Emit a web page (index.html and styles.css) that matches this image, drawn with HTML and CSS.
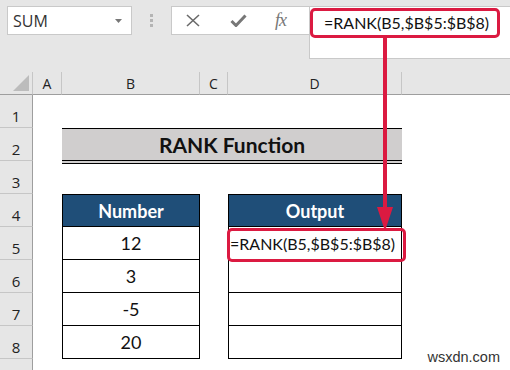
FILE: index.html
```html
<!DOCTYPE html>
<html lang="en">
<head>
    <meta charset="UTF-8">
    <title>RANK Function</title>
    <link rel="stylesheet" href="styles.css">
</head>
<body>
    <div class="app">
        <div class="toolbar">
            <div class="name-box">
                <span>SUM</span>
                <svg class="drop" width="7" height="4" viewBox="0 0 7 4"><polygon points="0,0 7,0 3.5,4" /></svg>
            </div>
            <div class="grip"><i></i><i></i><i></i></div>
            <div class="buttons">
                <svg class="btn-x" width="14" height="13" viewBox="0 0 14 13"><path d="M1 1 L13 12 M13 1 L1 12" /></svg>
                <svg class="btn-check" width="17" height="13" viewBox="0 0 17 13"><path d="M1.5 7 L6 11.5 L15.5 1.5" /></svg>
                <span class="fx">fx</span>
            </div>
            <div class="formula-bar">
                <span class="formula">=RANK(B5,$B$5:$B$8)</span>
            </div>
        </div>

        <div class="sheet">
            <div class="corner"><svg width="16" height="16" viewBox="0 0 16 16"><polygon points="16,0 16,16 0,16" /></svg></div>
            <div class="col-head">A</div>
            <div class="col-head">B</div>
            <div class="col-head">C</div>
            <div class="col-head">D</div>
            <div class="col-head last"></div>

            <div class="row-head">1</div>
            <div></div><div></div><div></div><div></div><div></div>

            <div class="row-head">2</div>
            <div></div>
            <div class="title">RANK Function</div>
            <div></div>

            <div class="row-head">3</div>
            <div></div><div></div><div></div><div></div><div></div>

            <div class="row-head">4</div>
            <div></div>
            <div class="th">Number</div>
            <div></div>
            <div class="th">Output</div>
            <div></div>

            <div class="row-head">5</div>
            <div></div>
            <div class="td">12</div>
            <div></div>
            <div class="td marked">=RANK(B5,$B$5:$B$8)</div>
            <div></div>

            <div class="row-head">6</div>
            <div></div>
            <div class="td">3</div>
            <div></div>
            <div class="td"></div>
            <div></div>

            <div class="row-head">7</div>
            <div></div>
            <div class="td">-5</div>
            <div></div>
            <div class="td"></div>
            <div></div>

            <div class="row-head">8</div>
            <div></div>
            <div class="td">20</div>
            <div></div>
            <div class="td"></div>
            <div></div>

            <div class="row-head"></div>
            <div></div><div></div><div></div><div></div><div></div>
        </div>

        <!-- annotation arrow from formula bar down to D5 -->
        <svg class="arrow" width="510" height="370" viewBox="0 0 510 370">
            <rect x="383" y="38" width="4" height="172" />
            <polygon points="377,207 393,207 385,231" />
        </svg>

        <span class="watermark">wsxdn.com</span>
    </div>
</body>
</html>
```

FILE: styles.css
```css
body {
    margin: 0;
    background-color: #fff;
    font-family: "Open Sans", sans-serif;
    color: #222;
}

.app {
    position: relative;
    width: 510px;
    height: 370px;
    overflow: hidden;
}

/* formula bar area */
.toolbar {
    height: 72px;
    box-sizing: border-box;
    padding: 6px 0 0 7px;
    background-color: #e6e6e6;
    display: flex;
    align-items: flex-start;
}

.name-box {
    width: 125px;
    height: 29px;
    box-sizing: border-box;
    border: 1px solid #c9c9c9;
    background-color: #fff;
    display: flex;
    align-items: center;
    justify-content: space-between;
    padding: 0 9px 0 5px;
    font-size: 16px;
    color: #333;
}

.drop {
    fill: #777;
}

.grip {
    display: flex;
    flex-direction: column;
    gap: 2px;
    margin: 8px 18px 0 18px;
}

.grip i {
    width: 3px;
    height: 3px;
    background-color: #b4b4b4;
}

.buttons {
    width: 138px;
    height: 29px;
    box-sizing: border-box;
    border: 1px solid #c9c9c9;
    border-right: none;
    background-color: #fff;
    display: flex;
    align-items: center;
    padding-left: 14px;
}

.buttons svg {
    fill: none;
}

.btn-x {
    stroke: #6a6a6a;
    stroke-width: 1.6;
}

.btn-check {
    margin-left: 30px;
    stroke: #777;
    stroke-width: 3;
}

.fx {
    margin-left: 28px;
    font-family: "Liberation Serif", serif;
    font-style: italic;
    font-size: 18px;
    color: #777;
    letter-spacing: -1px;
}

.formula-bar {
    flex: 1;
    height: 53px;
    box-sizing: border-box;
    border: 1px solid #c9c9c9;
    border-right: none;
    background-color: #fff;
    padding: 1px 0 0 0;
}

.formula {
    display: inline-block;
    width: 190px;
    height: 30px;
    box-sizing: border-box;
    border: 3px solid #db1a41;
    border-radius: 5px;
    padding-left: 11px;
    font-family: Lato, sans-serif;
    font-size: 16px;
    line-height: 24px;
    color: #111;
}

/* worksheet */
.sheet {
    display: grid;
    grid-template-columns: 33px 29px 138px 28px 174px 1fr;
    grid-template-rows: 23px repeat(9, 33px);
    font-family: Lato, sans-serif;
    color: #111;
}

.corner,
.col-head {
    background-color: #e6e6e6;
    border-bottom: 1px solid #9e9e9e;
    border-right: 1px solid #c6c6c6;
}

.corner {
    display: flex;
    align-items: flex-end;
    justify-content: flex-end;
    padding: 0 3px 3px 0;
    fill: #bcbcbc;
}

.col-head {
    display: flex;
    align-items: center;
    justify-content: center;
    font-family: "Open Sans", sans-serif;
    font-size: 14px;
    color: #222;
}

.col-head.last {
    border-right: none;
}

.row-head {
    background-color: #e6e6e6;
    border-right: 1px solid #9e9e9e;
    border-bottom: 1px solid #c6c6c6;
    display: flex;
    align-items: flex-end;
    justify-content: center;
    padding-bottom: 1px;
    font-family: "Open Sans", sans-serif;
    font-size: 15px;
    color: #222;
}

.title {
    grid-column: 3 / span 3;
    margin-bottom: -3px;
    border-top: 1px solid #000;
    border-bottom: 4px double #000;
    background-color: #d0cece;
    display: flex;
    align-items: center;
    justify-content: center;
    font-size: 21px;
    font-weight: bold;
}

.th,
.td {
    border: 1px solid #000;
    border-top: none;
    display: flex;
    align-items: center;
    justify-content: center;
    font-size: 18px;
}

.th {
    border-top: 1px solid #000;
    background-color: #1f4e78;
    color: #fff;
    font-weight: bold;
}

.td.marked {
    position: relative;
    justify-content: flex-start;
    padding-left: 1px;
    font-size: 16px;
}

.td.marked::after {
    content: "";
    position: absolute;
    left: -2px;
    right: -5px;
    top: 1px;
    height: 28px;
    border: 3px solid #db1a41;
    border-radius: 5px;
}

.arrow {
    position: absolute;
    left: 0;
    top: 0;
    fill: #db1a41;
    pointer-events: none;
}

.watermark {
    position: absolute;
    right: 10px;
    top: 349px;
    font-family: "Liberation Sans", sans-serif;
    font-size: 14.5px;
    color: #333;
}
```
